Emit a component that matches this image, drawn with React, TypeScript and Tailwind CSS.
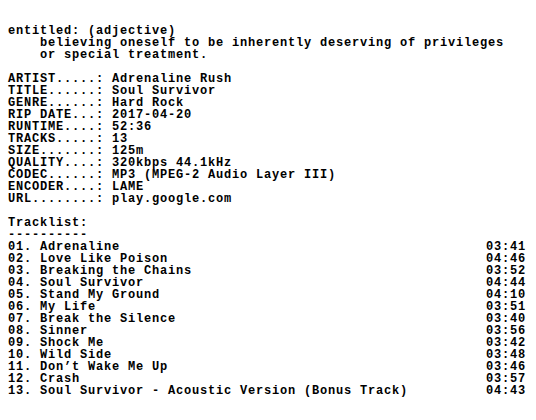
import React from 'react';

const INFO: [string, string][] = [
    ['ARTIST.....', 'Adrenaline Rush'],
    ['TITLE......', 'Soul Survivor'],
    ['GENRE......', 'Hard Rock'],
    ['RIP DATE...', '2017-04-20'],
    ['RUNTIME....', '52:36'],
    ['TRACKS.....', '13'],
    ['SIZE.......', '125m'],
    ['QUALITY....', '320kbps 44.1kHz'],
    ['CODEC......', 'MP3 (MPEG-2 Audio Layer III)'],
    ['ENCODER....', 'LAME'],
    ['URL........', 'play.google.com'],
];

const TRACKS: [string, string][] = [
    ['Adrenaline', '03:41'],
    ['Love Like Poison', '04:46'],
    ['Breaking the Chains', '03:52'],
    ['Soul Survivor', '04:44'],
    ['Stand My Ground', '04:10'],
    ['My Life', '03:51'],
    ['Break the Silence', '03:40'],
    ['Sinner', '03:56'],
    ['Shock Me', '03:42'],
    ['Wild Side', '03:48'],
    ["Don\u2019t Wake Me Up", '03:46'],
    ['Crash', '03:57'],
    ['Soul Survivor - Acoustic Version (Bonus Track)', '04:43'],
];

const Blank = () => <div className="h-[12px]" />;

export default function App() {
    return (
        <div className="w-[536px] h-[420px] bg-white text-black font-['Liberation_Mono',monospace] font-bold text-[12px] tracking-[0.8px] leading-[12px] whitespace-pre pt-[25px] pl-[8px] pr-[10px] overflow-hidden">
            <div>{`entitled: (adjective)`}</div>
            <div>{`    believing oneself to be inherently deserving of privileges`}</div>
            <div>{`    or special treatment.`}</div>
            <Blank />
            {INFO.map(([k, v]) => (
                <div key={k}>{`${k}: ${v}`}</div>
            ))}
            <Blank />
            <div>{`Tracklist:`}</div>
            <div>{`----------`}</div>
            {TRACKS.map(([name, time], i) => (
                <div key={i} className="flex justify-between">
                    <span>{`${String(i + 1).padStart(2, '0')}. ${name}`}</span>
                    <span className="tracking-[0.8px]">{time}</span>
                </div>
            ))}
        </div>
    );
}
